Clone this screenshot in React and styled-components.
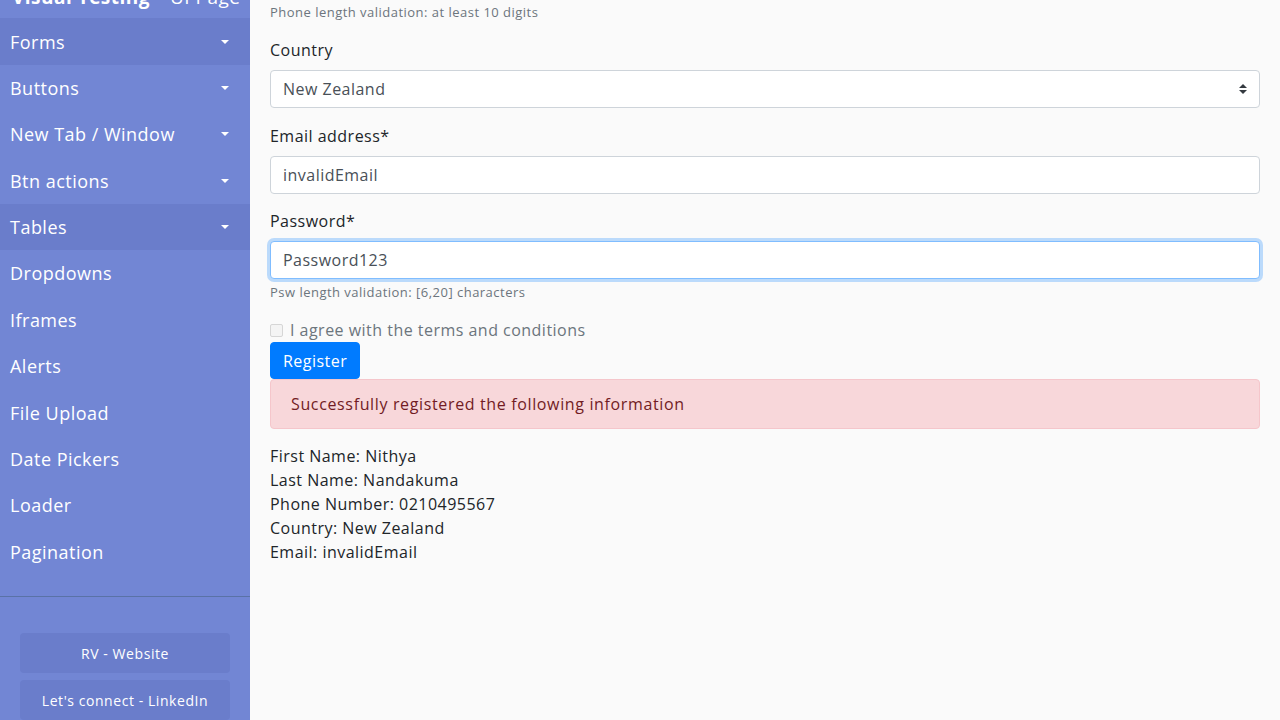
import React from "react";
import styled, { createGlobalStyle } from "styled-components";

const GlobalStyle = createGlobalStyle`
  html, body { margin: 0; padding: 0; }
  body {
    font-family: "Open Sans", "Liberation Sans", sans-serif;
    letter-spacing: 0.03em;
    background: #fafafa;
    color: #212529;
    overflow: hidden;
  }
  * { box-sizing: border-box; }
`;

const Layout = styled.div`
  display: flex;
  width: 1280px;
  height: 720px;
  overflow: hidden;
`;

const Sidebar = styled.aside`
  width: 250px;
  flex: 0 0 250px;
  background: #7286d4;
  color: #fff;
  display: flex;
  flex-direction: column;
`;

const Brand = styled.div`
  height: 19px;
  overflow: hidden;
  padding-left: 12px;
`;

const BrandText = styled.div`
  margin-top: -16px;
  font-size: 19px;
  line-height: 26px;
  white-space: nowrap;
  b { font-weight: 700; }
  span { font-weight: 400; margin-left: 8px; }
`;

const NavList = styled.nav`
  display: flex;
  flex-direction: column;
`;

const NavItem = styled.div`
  height: 46.4px;
  display: flex;
  align-items: center;
  justify-content: space-between;
  padding: 0 21px 0 10px;
  font-size: 18px;
  background: ${(p) => (p.$active ? "#6a7dcb" : "transparent")};
`;

const Caret = styled.span`
  width: 0;
  height: 0;
  border-left: 4px solid transparent;
  border-right: 4px solid transparent;
  border-top: 4px solid #fff;
`;

const Divider = styled.div`
  margin-top: 21px;
  height: 1px;
  background: #5a72a6;
`;

const SideButtons = styled.div`
  display: flex;
  flex-direction: column;
  gap: 7px;
  padding: 36px 20px 0;
`;

const SideButton = styled.div`
  height: 40px;
  display: flex;
  align-items: center;
  justify-content: center;
  background: #6a7dcb;
  border-radius: 4px;
  font-size: 14px;
  letter-spacing: 0.04em;
  color: #fff;
`;

const Main = styled.main`
  flex: 1;
  padding: 3px 20px 0;
`;

const Group = styled.div`
  margin-bottom: ${(p) => (p.$mb != null ? p.$mb : 16)}px;
`;

const Label = styled.div`
  font-size: 16px;
  line-height: 24px;
  margin-bottom: 8px;
`;

const Field = styled.div`
  height: 38px;
  display: flex;
  align-items: center;
  justify-content: space-between;
  padding: 0 12px;
  background: #fff;
  border: 1px solid ${(p) => (p.$focus ? "#80bdff" : "#ced4da")};
  border-radius: 4px;
  font-size: 16px;
  color: #495057;
  box-shadow: ${(p) => (p.$focus ? "0 0 0 3px rgba(0,123,255,.25)" : "none")};
`;

const Help = styled.div`
  font-size: 13px;
  line-height: 19px;
  color: #6c757d;
  margin-top: ${(p) => (p.$mt != null ? p.$mt : 4)}px;
`;

const CheckRow = styled.label`
  display: flex;
  align-items: center;
  gap: 7px;
  font-size: 16px;
  line-height: 24px;
  color: #6c757d;
`;

const CheckBox = styled.span`
  width: 13px;
  height: 13px;
  border: 1px solid #d6d6d6;
  background: #f4f4f4;
  border-radius: 2px;
`;

const Button = styled.button`
  display: block;
  height: 37px;
  padding: 0 12px;
  background: #007bff;
  border: 1px solid #007bff;
  border-radius: 4px;
  color: #fff;
  font-family: inherit;
  letter-spacing: 0.03em;
  font-size: 16px;
`;

const Alert = styled.div`
  padding: 12px 20px;
  background: #f8d7da;
  border: 1px solid #f5c6cb;
  border-radius: 4px;
  color: #721c24;
  font-size: 16px;
  line-height: 24px;
  letter-spacing: 0.04em;
  margin-bottom: 15px;
`;

const InfoLine = styled.div`
  font-size: 16px;
  line-height: 24px;
  color: #212529;
`;

const SelectArrows = () => (
  <svg width="8" height="10" viewBox="0 0 4 5" aria-hidden="true">
    <path fill="#343a40" d="M2 0L0 2h4zm0 5L0 3h4z" />
  </svg>
);

const navItems = [
  { label: "Forms", caret: true, active: true },
  { label: "Buttons", caret: true },
  { label: "New Tab / Window", caret: true },
  { label: "Btn actions", caret: true },
  { label: "Tables", caret: true, active: true },
  { label: "Dropdowns" },
  { label: "Iframes" },
  { label: "Alerts" },
  { label: "File Upload" },
  { label: "Date Pickers" },
  { label: "Loader" },
  { label: "Pagination" },
];

const info = [
  "First Name: Nithya",
  "Last Name: Nandakuma",
  "Phone Number: 0210495567",
  "Country: New Zealand",
  "Email: invalidEmail",
];

export default function App() {
  return (
    <>
      <GlobalStyle />
      <Layout>
        <Sidebar>
          <Brand>
            <BrandText>
              <b>Visual Testing</b>
              <span>- UI Page</span>
            </BrandText>
          </Brand>
          <NavList>
            {navItems.map((n) => (
              <NavItem key={n.label} $active={n.active}>
                {n.label}
                {n.caret && <Caret />}
              </NavItem>
            ))}
          </NavList>
          <Divider />
          <SideButtons>
            <SideButton>RV - Website</SideButton>
            <SideButton>Let's connect - LinkedIn</SideButton>
          </SideButtons>
        </Sidebar>
        <Main>
          <Group>
            <Help $mt={0}>Phone length validation: at least 10 digits</Help>
          </Group>
          <Group>
            <Label>Country</Label>
            <Field>
              New Zealand
              <SelectArrows />
            </Field>
          </Group>
          <Group $mb={15}>
            <Label>Email address*</Label>
            <Field>invalidEmail</Field>
          </Group>
          <Group>
            <Label>Password*</Label>
            <Field $focus>Password123</Field>
            <Help>Psw length validation: [6,20] characters</Help>
          </Group>
          <Group $mb={0}>
            <CheckRow>
              <CheckBox />
              I agree with the terms and conditions
            </CheckRow>
          </Group>
          <Button>Register</Button>
          <Alert>Successfully registered the following information</Alert>
          {info.map((l) => (
            <InfoLine key={l}>{l}</InfoLine>
          ))}
        </Main>
      </Layout>
    </>
  );
}
